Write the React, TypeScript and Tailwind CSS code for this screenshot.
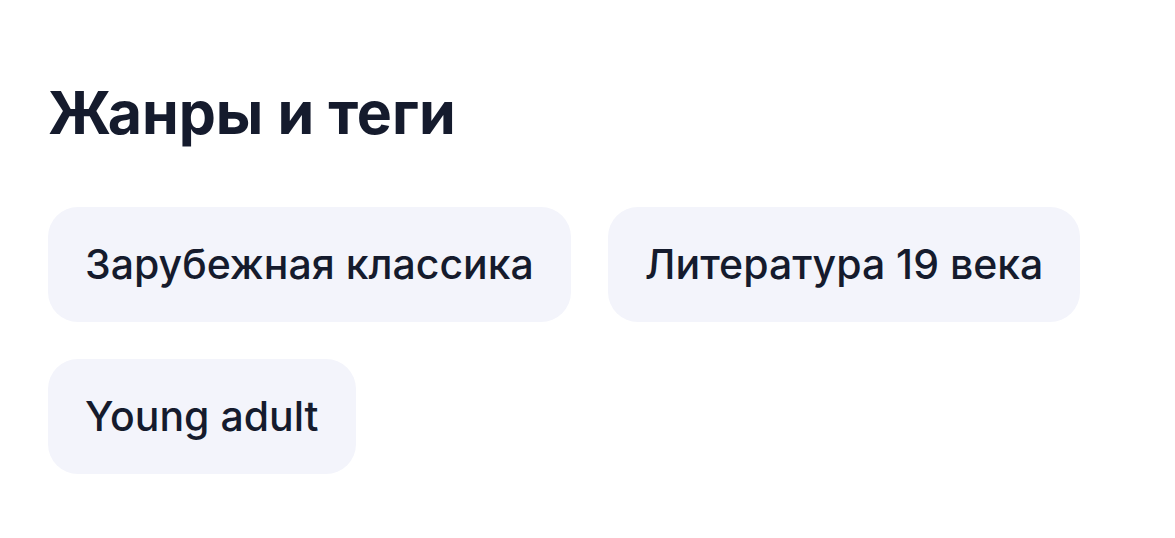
export default function App() {
  const tags = ["Зарубежная классика", "Литература 19 века", "Young adult"];
  return (
    <div
      className="min-h-[538px] w-full bg-white px-[48px] pt-[78px] text-[#151b2d]"
      style={{ fontFamily: "Inter, 'Noto Sans', sans-serif" }}
    >
      <h2 className="text-[59px] font-bold leading-[70px]">Жанры и теги</h2>
      <div className="mt-[59px] flex max-w-[1060px] flex-wrap gap-[37px]">
        {tags.map((t) => (
          <div
            key={t}
            className="flex h-[115px] items-center rounded-[30px] bg-[#f3f4fb] px-[37px] text-[41px] font-medium leading-none"
          >
            {t}
          </div>
        ))}
      </div>
    </div>
  );
}
